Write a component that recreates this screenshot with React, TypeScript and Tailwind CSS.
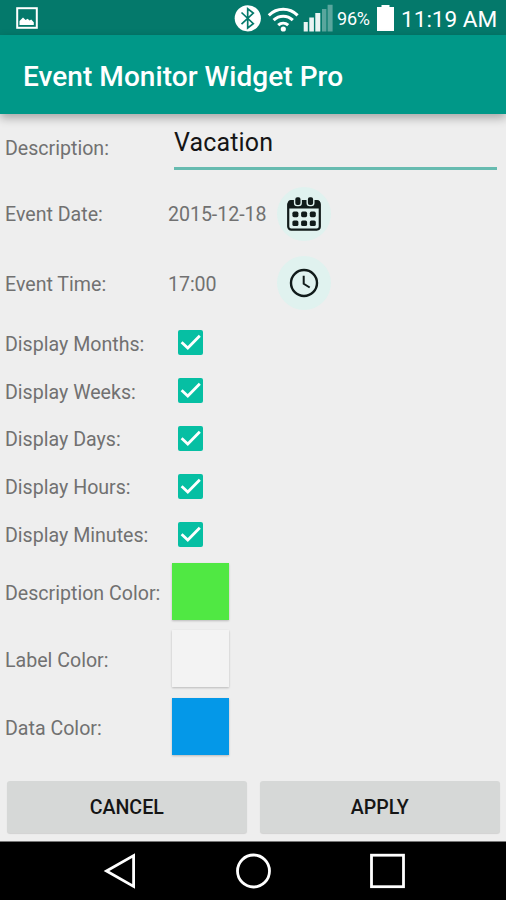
import React from "react";

function StatusBar() {
  return (
    <div className="flex h-[35px] shrink-0 items-center bg-[#04796b] text-white">
      <svg className="ml-4 h-[22px] w-[22px] shrink-0" viewBox="0 0 22 22">
        <rect x="1.2" y="1.2" width="19.6" height="19.6" fill="none" stroke="#fff" strokeWidth="2" />
        <path d="M3.5 18v-4l3.5-3.6 2.6 2.6 2-1.2 2 1.6 1.6-.8 2.6 2.6V18z" fill="#fff" />
      </svg>
      <svg className="ml-[196px] h-[35px] w-[102px] shrink-0" viewBox="234 0 102 35">
        <circle cx="247.8" cy="18.3" r="13.1" fill="#fff" />
        <path d="M241.5 12.5l11.8 11.2-5.6 4.3V8.8l5.6 4.2-11.8 11.2" fill="none" stroke="#04796b" strokeWidth="1.7" />
        <g fill="none" stroke="#fff" strokeWidth="3.1">
          <path d="M268.8 15.3c8.2-8 20.6-8 28.8 0" />
          <path d="M273.6 20.2c5.6-5.2 13.6-5.2 19.2 0" />
          <path d="M278.2 25.2c3-2.7 7-2.7 10 0" />
        </g>
        <circle cx="283.3" cy="29" r="2.6" fill="#fff" />
        <path d="M303.7 22h4.1v9.6h-4.1zM309.3 17.5h4.6v14.1h-4.6zM315.3 13h5v18.6h-5z" fill="#fff" fillOpacity=".92" />
        <path d="M322 9h4.4v22.6H322zM327.6 4.7h5v26.9h-5z" fill="#fff" fillOpacity=".34" />
      </svg>
      <span className="ml-px w-[35px] whitespace-nowrap pt-[3px] text-[18px] leading-[32px] tracking-[-0.2px]">96%</span>
      <svg className="ml-[5px] h-[26px] w-[17px] shrink-0" viewBox="0 0 17 26">
        <path d="M4.5 0h8v2H17v24H0V2h4.5z" fill="#fff" />
      </svg>
      <span className="ml-[7px] whitespace-nowrap pt-[4px] text-[22.6px] leading-[32px]">11:19 AM</span>
    </div>
  );
}

function Row({ label, height, children }: { label: string; height: string; children: React.ReactNode }) {
  return (
    <div className={`flex shrink-0 items-center pl-[5px] ${height}`}>
      <span className="w-[163px] shrink-0 whitespace-nowrap pt-[2px] text-[19.6px] leading-6 text-[#717171]">{label}</span>
      {children}
    </div>
  );
}

function Checkbox() {
  return (
    <svg className="mb-[2px] ml-2.5 h-[25px] w-[25px]" viewBox="0 0 25 25">
      <rect width="25" height="25" rx="2" fill="#06bfa3" />
      <path d="M3.6 12.2l6.2 5.8L21.8 5.8" fill="none" stroke="#fff" strokeWidth="2.8" />
    </svg>
  );
}

function CalendarIcon() {
  return (
    <svg className="h-[34px] w-[34px]" viewBox="0 0 34 34">
      <rect x="1.2" y="4.6" width="31.6" height="28" rx="3" fill="none" stroke="#111b1a" strokeWidth="2.2" />
      <path d="M1 11.5V6q0-3 3-3h26q3 0 3 3v5.5z" fill="#111b1a" />
      <g fill="#111b1a" stroke="#e0f2ef" strokeWidth="1.4">
        <rect x="7.6" y="-.4" width="6.6" height="9" rx="2.6" />
        <rect x="20.2" y="-.4" width="6.6" height="9" rx="2.6" />
      </g>
      <g fill="#111b1a">
        <rect x="5.4" y="14.6" width="6" height="5.6" rx="1.6" />
        <rect x="14.1" y="14.6" width="6" height="5.6" rx="1.6" />
        <rect x="22.8" y="14.6" width="6" height="5.6" rx="1.6" />
        <rect x="5.4" y="23.4" width="6" height="5.6" rx="1.6" />
        <rect x="14.1" y="23.4" width="6" height="5.6" rx="1.6" />
        <rect x="22.8" y="23.4" width="6" height="5.6" rx="1.6" />
      </g>
    </svg>
  );
}

function ClockIcon() {
  return (
    <svg className="h-[30px] w-[30px]" viewBox="0 0 30 30" fill="none" stroke="#111b1a">
      <circle cx="15" cy="15" r="13" strokeWidth="2.4" />
      <path d="M14.7 7.8v8l6 3.7" strokeWidth="2" />
    </svg>
  );
}

function Picker({ value, children }: { value: string; children: React.ReactNode }) {
  return (
    <>
      <span className="w-[109px] whitespace-nowrap pt-[2px] text-[19.6px] leading-6 tracking-[-0.05px] text-[#717171]">{value}</span>
      <button className="mb-px flex h-[54px] w-[54px] items-center justify-center rounded-full bg-[#e0f2ef]">{children}</button>
    </>
  );
}

const units = ["Months", "Weeks", "Days", "Hours", "Minutes"];
const colors = [
  { label: "Description Color:", bg: "bg-[#50e843]" },
  { label: "Label Color:", bg: "bg-[#f3f3f3]" },
  { label: "Data Color:", bg: "bg-[#0498e8]" },
];

export default function App() {
  return (
    <div className="flex h-[900px] w-[506px] flex-col overflow-hidden bg-[#eeeeee] font-['Roboto',sans-serif]">
      <StatusBar />
      <header className="flex h-[79px] shrink-0 items-center bg-[#009888] pl-[23px] pt-1 shadow-[0_4px_9px_rgba(0,0,0,0.3)]">
        <h1 className="whitespace-nowrap text-[28px] font-medium leading-8 tracking-[0.05px] text-white">Event Monitor Widget Pro</h1>
      </header>
      <main className="flex flex-1 flex-col">
        <Row label="Description:" height="h-[67px]">
          <div className="ml-[6px] h-[45px] w-[323px] border-b-[3px] border-[#67bbb0] pt-[2px] text-[25px] leading-[32px] tracking-[0.15px] text-[#151515]">
            Vacation
          </div>
        </Row>
        <Row label="Event Date:" height="h-[66px]">
          <Picker value="2015-12-18">
            <CalendarIcon />
          </Picker>
        </Row>
        <Row label="Event Time:" height="h-[73px]">
          <Picker value="17:00">
            <ClockIcon />
          </Picker>
        </Row>
        {units.map((u) => (
          <Row key={u} label={`Display ${u}:`} height="h-[47.8px]">
            <Checkbox />
          </Row>
        ))}
        {colors.map((c) => (
          <Row key={c.label} label={c.label} height="h-[67.5px]">
            <div className={`mb-[3px] ml-1 h-[57px] w-[57px] shadow-[0_1px_2px_rgba(0,0,0,0.22)] ${c.bg}`} />
          </Row>
        ))}
        <div className="mt-[19.5px] flex gap-[13.5px] px-[7px]">
          {["CANCEL", "APPLY"].map((t) => (
            <button
              key={t}
              className="h-[52px] w-[239.5px] shrink-0 rounded-[3px] bg-[#d6d8d7] pt-px text-[19.6px] font-medium text-[#151515] shadow-[0_1px_1px_rgba(0,0,0,0.12)]"
            >
              {t}
            </button>
          ))}
        </div>
      </main>
      <nav className="h-[59px] shrink-0 border-t border-[#777] bg-black">
        <svg className="h-[58px] w-[506px]" viewBox="0 842 506 58" fill="none" stroke="#fff" strokeWidth="2.8">
          <path d="M106.5 871L133.6 855.6V886.4z" />
          <circle cx="253.5" cy="871" r="16" />
          <rect x="371.5" y="855.2" width="32" height="31.5" />
        </svg>
      </nav>
    </div>
  );
}
